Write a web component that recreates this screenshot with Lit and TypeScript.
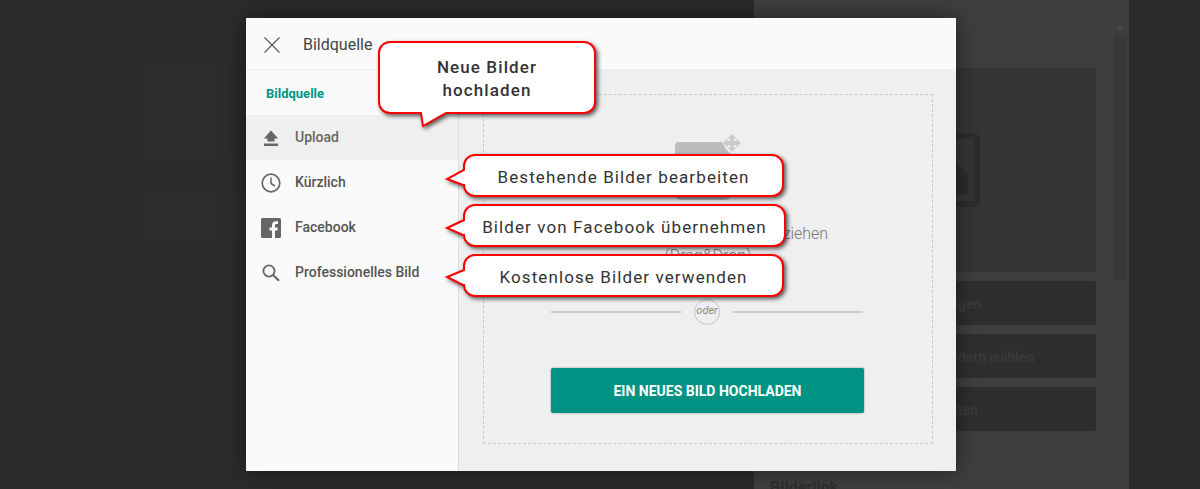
import { LitElement, html, css, svg } from "lit";
import { customElement } from "lit/decorators.js";

type Callout = { x: number; y: number; w: number; h: number; d: string; lines: string[]; cls: string };

const callouts: Callout[] = [
  { x: 378, y: 41, w: 218, h: 73, cls: "tall", lines: ["Neue Bilder", "hochladen"],
    d: "M12 1H206A11 11 0 0 1 217 12V61A11 11 0 0 1 206 72H68L45 85L43 72H12A11 11 0 0 1 1 61V12A11 11 0 0 1 12 1Z" },
  { x: 463, y: 154, w: 321, h: 43, cls: "", lines: ["Bestehende Bilder bearbeiten"],
    d: "M12 1H309A11 11 0 0 1 320 12V31A11 11 0 0 1 309 42H12A11 11 0 0 1 1 31Q1 31 0 31L-16 25L1 16V12A11 11 0 0 1 12 1Z" },
  { x: 463, y: 204, w: 323, h: 43, cls: "", lines: ["Bilder von Facebook übernehmen"],
    d: "M12 1H311A11 11 0 0 1 322 12V31A11 11 0 0 1 311 42H12A11 11 0 0 1 1 31Q1 31 0 31L-16 24L1 16V12A11 11 0 0 1 12 1Z" },
  { x: 463, y: 254, w: 321, h: 43, cls: "", lines: ["Kostenlose Bilder verwenden"],
    d: "M12 1H309A11 11 0 0 1 320 12V31A11 11 0 0 1 309 42H12A11 11 0 0 1 1 31Q1 31 0 31L-16 23L1 16V12A11 11 0 0 1 12 1Z" },
];

const icons = {
  close: svg`<svg width="18" height="18" viewBox="0 0 18 18"><path d="M1.500 1.500L16.500 16.500M16.500 1.500L1.500 16.500" stroke="#555" stroke-width="1.100" fill="none"/></svg>`,
  upload: svg`<svg width="20" height="20" viewBox="0 0 20 20"><path d="M10 2.500L17.200 10.500H13.600V13.500H6.400V10.500H2.800Z M3 15.500H17V18H3Z" fill="#666"/></svg>`,
  clock: svg`<svg width="20" height="20" viewBox="0 0 20 20"><circle cx="10" cy="10" r="8.800" stroke="#666" stroke-width="1.700" fill="none"/><path d="M10 4.500V10.500L14 13" stroke="#666" stroke-width="1.500" fill="none"/></svg>`,
  fb: svg`<svg width="20" height="20" viewBox="0 0 20 20"><rect width="20" height="20" rx="1.500" fill="#666"/><path d="M14 20V12.400H16.400L16.800 9.400H14V7.600C14 6.700 14.300 6.100 15.500 6.100H17V3.400C16.700 3.400 15.800 3.300 14.800 3.300C12.600 3.300 11 4.700 11 7.200V9.400H8.500V12.400H11V20Z" fill="#fafafa"/></svg>`,
  search: svg`<svg width="20" height="20" viewBox="0 0 20 20"><circle cx="8" cy="8" r="5.600" stroke="#666" stroke-width="1.800" fill="none"/><path d="M12 12L18 17.800" stroke="#666" stroke-width="2.200" fill="none"/></svg>`,
  picture: svg`<svg width="66" height="58" viewBox="0 0 66 58"><path d="M4 0H46Q48 0 50 6L56 12V52A6 6 0 0 1 50 58H6A6 6 0 0 1 0 52V4A4 4 0 0 1 4 0Z" fill="#bcbcbc"/></svg>`,
  move: svg`<svg width="18" height="18" viewBox="0 0 18 18" fill="#cbcbcb"><path d="M9 0L13.500 4.500H11V7H13.500V4.500L18 9L13.500 13.500V11H11V13.500H13.500L9 18L4.500 13.500H7V11H4.500V13.500L0 9L4.500 4.500V7H7V4.500H4.500Z"/></svg>`,
  frame: svg`<svg width="110" height="74" viewBox="0 0 110 74"><rect x="3" y="3" width="104" height="68" rx="4" fill="none" stroke="#2c2c2c" stroke-width="6"/><path d="M20 62L50 28L70 46L86 30L98 42V62Z" fill="#2c2c2c"/></svg>`,
};

const nav = [
  { icon: icons.upload, label: "Upload", active: true },
  { icon: icons.clock, label: "Kürzlich", active: false },
  { icon: icons.fb, label: "Facebook", active: false },
  { icon: icons.search, label: "Professionelles Bild", active: false },
];

@customElement("app-root")
export class AppRoot extends LitElement {
  static styles = css`
    :host { display: block; width: 1200px; height: 489px; position: relative; overflow: hidden; background: #2b2b2b; font-family: Roboto, "Liberation Sans", sans-serif; }
    .bg { display: grid; grid-template-columns: 754px 375px 71px; height: 489px; }
    .left { padding: 60px 0 0 142px; display: flex; flex-direction: column; gap: 34px; }
    .left i { display: block; background: #2c2c2c; }
    .left .a { width: 84px; height: 98px; }
    .left .b { width: 104px; height: 48px; }
    .side { background: #3e3e3e; padding: 68px 33px 0 0; display: flex; flex-direction: column; align-items: flex-end; position: relative; }
    .photo { width: 342px; height: 204px; background: #353535; margin-bottom: 9px; flex: none; display: flex; align-items: center; justify-content: center; }
    .photo svg { display: block; }
    .ghost { width: 342px; height: 44px; margin-bottom: 9px; flex: none; border-radius: 2px; background: #2e2e2e; color: #3a3a3a; font-size: 14px; font-weight: 700; }
    .ghost span { display: block; padding: 15px 0 0 200px; }
    .link { width: 342px; margin-top: 38px; color: #2e2e2e; font-size: 16px; font-weight: 700; text-indent: 16px; }
    .scroll { position: absolute; left: 360px; top: 35px; width: 13px; height: 246px; background: #383838; }
    .arrow { position: absolute; left: 362px; top: 24px; width: 0; height: 0; border: 4px solid transparent; border-bottom: 5px solid #4a4a4a; border-top: 0; }
    .modal { position: absolute; left: 246px; top: 18px; width: 710px; height: 453px; display: grid; grid-template-rows: 52px 1fr; background: #efefef; box-shadow: 0 0 22px rgba(0,0,0,.45); overflow: hidden; border-radius: 1px; }
    .head { background: #fafafa; border-bottom: 1px solid #efefef; display: flex; align-items: center; padding: 2px 0 0 17px; gap: 22px; color: #444; font-size: 16px; font-weight: 400; }
    .head svg { display: block; }
    .body { display: grid; grid-template-columns: 213px 1fr; min-height: 0; }
    .menu { background: #fafafa; border-right: 1px solid #ddd; }
    .menu h2 { margin: 0; height: 45px; box-sizing: border-box; padding: 16px 0 0 20px; color: #009688; font-size: 13px; font-weight: 700; line-height: 16px; }
    .item { height: 45px; display: flex; align-items: center; padding-left: 15px; gap: 14px; color: #555; font-size: 14px; font-weight: 500; }
    .item span { margin-bottom: 2px; }
    .item.on { background: #efefef; color: #666; }
    .item svg { display: block; flex: none; }
    .main { padding: 24px 23px 26px 24px; min-height: 0; }
    .drop { height: 350px; box-sizing: border-box; border: 1px dashed #c8c8c8; display: flex; flex-direction: column; align-items: center; padding-top: 47px; color: #777; position: relative; }
    .pic { display: block; height: 58px; width: 66px; position: relative; }
    .pic .mv { position: absolute; left: 48px; top: -8px; }
    .pic svg { display: block; }
    .t1 { margin-top: 24px; font-size: 16px; font-weight: 300; line-height: 20px; height: 20px; white-space: nowrap; }
    .t2 { margin-top: 2px; font-size: 16px; font-weight: 300; line-height: 20px; height: 20px; }
    .or { margin: 33px 2px 0 0; width: 312px; display: grid; grid-template-columns: 130px 52px 130px; align-items: center; }
    .or i { display: block; height: 2px; background: #ccc; }
    .or span { justify-self: center; width: 26px; height: 26px; box-sizing: border-box; border: 1px solid #c4c4c4; border-radius: 50%; font-size: 11px; font-style: italic; font-weight: 400; color: #888; text-align: center; line-height: 22px; }
    .btn { margin: 43px 1px 0 0; width: 313px; height: 45px; border: 0; border-radius: 2px; background: #009384; color: #fff; font: 700 14px Roboto, sans-serif; box-shadow: 0 0 2px rgba(0,0,0,.45); padding: 0; }
    .call { position: absolute; box-sizing: border-box; padding-top: 3px; display: flex; flex-direction: column; align-items: center; justify-content: center; color: #333; font-size: 17px; font-weight: 400; letter-spacing: 1.1px; line-height: 23px; }
    .call.tall { font-weight: 500; padding-top: 2px; }
    .call svg { position: absolute; left: 0; top: 0; overflow: visible; filter: drop-shadow(2px 2px 2px rgba(0,0,0,.65)); }
    .call path { fill: #fff; stroke: #f00; stroke-width: 2; stroke-linejoin: miter; }
    .call span { position: relative; white-space: nowrap; }
  `;

  render() {
    return html`
      <div class="bg">
        <div class="left"><i class="a"></i><i class="b"></i></div>
        <div class="side">
          <div class="arrow"></div>
          <div class="scroll"></div>
          <div class="photo">${icons.frame}</div>
          <div class="ghost"><span>igen</span></div>
          <div class="ghost"><span>ldern wählen</span></div>
          <div class="ghost"><span>iten</span></div>
          <div class="link">Bilderlink</div>
        </div>
        <div></div>
      </div>
      <div class="modal">
        <div class="head">${icons.close}<span>Bildquelle</span></div>
        <div class="body">
          <div class="menu">
            <h2>Bildquelle</h2>
            ${nav.map((n) => html`<div class="item ${n.active ? "on" : ""}">${n.icon}<span>${n.label}</span></div>`)}
          </div>
          <div class="main">
            <div class="drop">
              <div class="pic">${icons.picture}<div class="mv">${icons.move}</div></div>
              <div class="t1">Bilder in dieses Feld hierher ziehen</div>
              <div class="t2">(Drag&amp;Drop)</div>
              <div class="or"><i></i><span>oder</span><i></i></div>
              <button class="btn">EIN NEUES BILD HOCHLADEN</button>
            </div>
          </div>
        </div>
      </div>
      ${callouts.map(
        (c) => html`<div class="call ${c.cls}" style="left:${c.x}px;top:${c.y}px;width:${c.w}px;height:${c.h}px">
          <svg width=${c.w} height=${c.h} viewBox="0 0 ${c.w} ${c.h}"><path d=${c.d}></path></svg>
          ${c.lines.map((l) => html`<span>${l}</span>`)}
        </div>`
      )}
    `;
  }
}
